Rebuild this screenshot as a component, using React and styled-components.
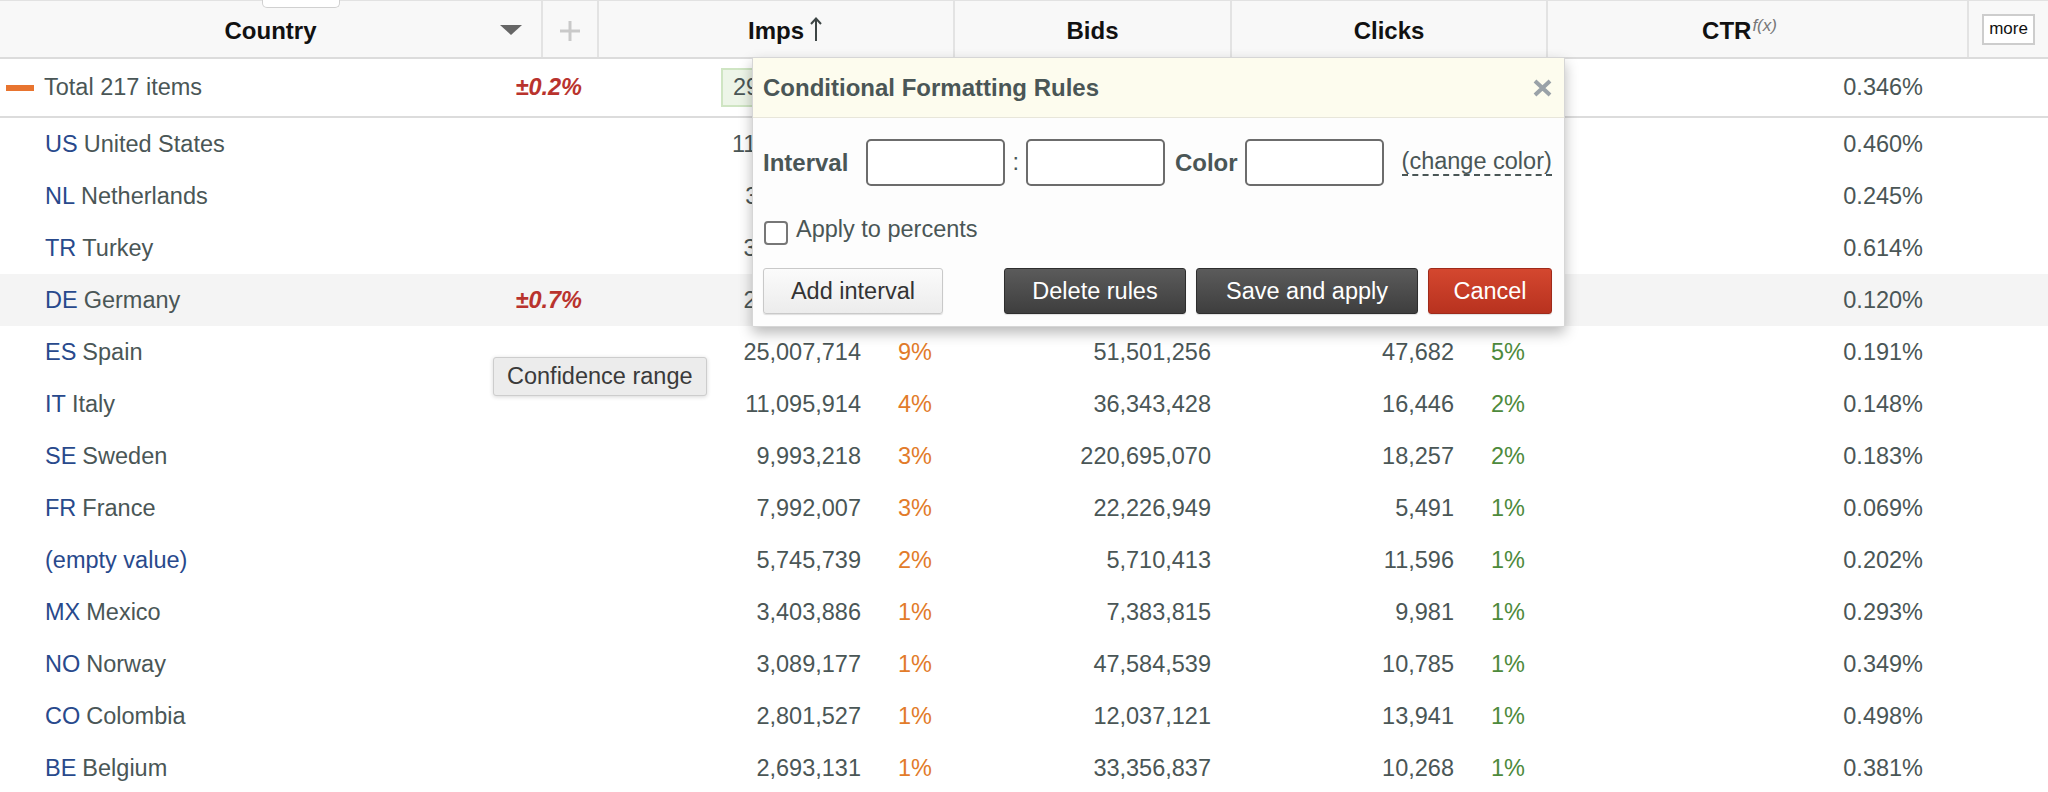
import React from 'react'
import styled, { createGlobalStyle } from 'styled-components'

const COLS = '543px 56px 356px 277px 316px 421px 79px'

const GlobalStyle = createGlobalStyle`
  body {
    margin: 0;
    background: #fff;
    font-family: "Liberation Sans", Arial, Helvetica, sans-serif;
  }
`

const rows = [
  { code: 'US', name: 'United States', imps: '116,285,450', ip: '40%', bids: '182,734,112', clicks: '534,913', cp: '40%', ctr: '0.460%' },
  { code: 'NL', name: 'Netherlands', imps: '38,420,115', ip: '13%', bids: '94,126,803', clicks: '94,129', cp: '7%', ctr: '0.245%' },
  { code: 'TR', name: 'Turkey', imps: '31,778,402', ip: '11%', bids: '61,904,377', clicks: '195,118', cp: '15%', ctr: '0.614%' },
  { code: 'DE', name: 'Germany', conf: '±0.7%', imps: '27,306,958', ip: '9%', bids: '48,220,510', clicks: '32,768', cp: '2%', ctr: '0.120%', hl: true },
  { code: 'ES', name: 'Spain', imps: '25,007,714', ip: '9%', bids: '51,501,256', clicks: '47,682', cp: '5%', ctr: '0.191%' },
  { code: 'IT', name: 'Italy', imps: '11,095,914', ip: '4%', bids: '36,343,428', clicks: '16,446', cp: '2%', ctr: '0.148%' },
  { code: 'SE', name: 'Sweden', imps: '9,993,218', ip: '3%', bids: '220,695,070', clicks: '18,257', cp: '2%', ctr: '0.183%' },
  { code: 'FR', name: 'France', imps: '7,992,007', ip: '3%', bids: '22,226,949', clicks: '5,491', cp: '1%', ctr: '0.069%' },
  { code: '', name: '(empty value)', imps: '5,745,739', ip: '2%', bids: '5,710,413', clicks: '11,596', cp: '1%', ctr: '0.202%' },
  { code: 'MX', name: 'Mexico', imps: '3,403,886', ip: '1%', bids: '7,383,815', clicks: '9,981', cp: '1%', ctr: '0.293%' },
  { code: 'NO', name: 'Norway', imps: '3,089,177', ip: '1%', bids: '47,584,539', clicks: '10,785', cp: '1%', ctr: '0.349%' },
  { code: 'CO', name: 'Colombia', imps: '2,801,527', ip: '1%', bids: '12,037,121', clicks: '13,941', cp: '1%', ctr: '0.498%' },
  { code: 'BE', name: 'Belgium', imps: '2,693,131', ip: '1%', bids: '33,356,837', clicks: '10,268', cp: '1%', ctr: '0.381%' },
]

const App = () => {
  return (
    <>
      <GlobalStyle />
      <Page>
        <HeaderRow>
          <HeadCell $split>
            <Tab />
            <span />
            <span>Country</span>
            <SortToggle>
              <svg width="22" height="10" viewBox="0 0 22 10"><polygon points="0,0 22,0 11,10" fill="#666" /></svg>
            </SortToggle>
          </HeadCell>
          <HeadCell>
            <svg width="20" height="20" viewBox="0 0 20 20">
              <path d="M10 0V20M0 10H20" stroke="#c9c9c9" strokeWidth="3" />
            </svg>
          </HeadCell>
          <HeadCell>
            Imps
            <SortArrow width="12" height="25" viewBox="0 0 12 25">
              <path d="M6 24V2M1 7L6 1.5L11 7" stroke="#3d4545" strokeWidth="2" fill="none" />
            </SortArrow>
          </HeadCell>
          <HeadCell>Bids</HeadCell>
          <HeadCell>Clicks</HeadCell>
          <HeadCell $shift={36}>
            CTR<Formula>f(x)</Formula>
          </HeadCell>
          <HeadCell $last>
            <MoreButton>more</MoreButton>
          </HeadCell>
        </HeaderRow>

        <TotalRow>
          <NameCell $pad={6}>
            <Label>
              <Dash />
              Total 217 items
            </Label>
            <Conf>±0.2%</Conf>
          </NameCell>
          <TotalImps>
            <TotalBox>293,544,015</TotalBox>
          </TotalImps>
          <NumCell $pr={21}>773,014,560</NumCell>
          <SplitCell>
            <Num>1,015,648</Num>
            <Pct />
          </SplitCell>
          <NumCell $pr={46}>0.346%</NumCell>
          <div />
        </TotalRow>

        {rows.map((r) => (
          <Row key={r.name} $hl={r.hl}>
            <NameCell $pad={45}>
              <Label>
                {r.code ? (
                  <>
                    <Code $gap>{r.code}</Code>
                    {r.name}
                  </>
                ) : (
                  <Code>{r.name}</Code>
                )}
              </Label>
              {r.conf && <Conf>{r.conf}</Conf>}
            </NameCell>
            <SplitCell>
              <Num>{r.imps}</Num>
              <Pct $tone="#e27b2a">{r.ip}</Pct>
            </SplitCell>
            <NumCell $pr={21}>{r.bids}</NumCell>
            <SplitCell>
              <Num>{r.clicks}</Num>
              <Pct $tone="#4d8a3c">{r.cp}</Pct>
            </SplitCell>
            <NumCell $pr={46}>{r.ctr}</NumCell>
            <div />
          </Row>
        ))}

        <Tooltip>Confidence range</Tooltip>

        <Popup>
          <PopHead>
            <PopTitle>Conditional Formatting Rules</PopTitle>
            <svg width="19" height="18" viewBox="0 0 19 18">
              <path d="M2 2L17 16M17 2L2 16" stroke="#9aa2a8" strokeWidth="4" />
            </svg>
          </PopHead>
          <PopBody>
            <FieldRow>
              <FieldLabel $mr={18}>Interval</FieldLabel>
              <Field />
              <Colon>:</Colon>
              <Field />
              <FieldLabel $ml={10} $mr={7}>Color</FieldLabel>
              <Field />
              <ChangeLink>(change color)</ChangeLink>
            </FieldRow>
            <CheckRow>
              <CheckBox />
              <CheckText>Apply to percents</CheckText>
            </CheckRow>
            <ButtonRow>
              <Button $kind="light" $w={180}>Add interval</Button>
              <Button $kind="dark" $w={182} $push>Delete rules</Button>
              <Button $kind="dark" $w={222}>Save and apply</Button>
              <Button $kind="red" $w={124}>Cancel</Button>
            </ButtonRow>
          </PopBody>
        </Popup>
      </Page>
    </>
  )
}

const Page = styled.div`
  position: relative;
  width: 2048px;
  height: 792px;
  overflow: hidden;
  color: #4a5656;
  font-size: 23.5px;
`

const HeaderRow = styled.div`
  display: grid;
  grid-template-columns: ${COLS};
  height: 59px;
  box-sizing: border-box;
  background: #f8f8f8;
  border-top: 1px solid #e2e2e2;
  border-bottom: 2px solid #dcdcdc;
`

const HeadCell = styled.div`
  position: relative;
  display: ${(p) => (p.$split ? 'grid' : 'flex')};
  grid-template-columns: 60px 1fr 60px;
  align-items: center;
  justify-content: center;
  padding-right: ${(p) => p.$shift || 0}px;
  padding-top: 3px;
  border-right: ${(p) => (p.$last ? 'none' : '2px solid #e3e3e3')};
  color: #111;
  font-size: 24px;
  font-weight: bold;
  text-align: center;
`

const Tab = styled.div`
  position: absolute;
  left: 262px;
  top: -2px;
  width: 76px;
  height: 8px;
  background: #fff;
  border: 1px solid #d0d0d0;
  border-top: none;
  border-radius: 0 0 5px 5px;
`

const SortToggle = styled.span`
  display: flex;
  justify-content: center;
  padding-bottom: 2px;
`

const SortArrow = styled.svg`
  margin-left: 6px;
  margin-right: -18px;
  margin-top: -2px;
`

const Formula = styled.sup`
  font-size: 17px;
  font-weight: normal;
  font-style: italic;
  color: #777;
  margin-left: 1px;
  position: relative;
  top: -5px;
`

const MoreButton = styled.span`
  display: flex;
  align-items: center;
  justify-content: center;
  width: 53px;
  height: 31px;
  box-sizing: border-box;
  margin-top: -3px;
  background: #fff;
  border: 2px solid #cdcdcd;
  color: #111;
  font-size: 17px;
  font-weight: normal;
`

const Row = styled.div`
  display: grid;
  grid-template-columns: ${COLS};
  height: 52px;
  align-items: center;
  background: ${(p) => (p.$hl ? '#f4f4f4' : '#fff')};
`

const TotalRow = styled(Row)`
  height: 59px;
  box-sizing: border-box;
  border-bottom: 2px solid #dcdcdc;
`

const NameCell = styled.div`
  grid-column: span 2;
  display: flex;
  align-items: center;
  justify-content: space-between;
  padding: 0 17px 0 ${(p) => p.$pad}px;
`

const Label = styled.span`
  display: flex;
  align-items: center;
  white-space: nowrap;
`

const Dash = styled.span`
  width: 28px;
  height: 6px;
  margin-right: 10px;
  background: #e8742f;
`

const Code = styled.span`
  color: #28498c;
  margin-right: ${(p) => (p.$gap ? '6px' : '0')};
`

const Conf = styled.span`
  color: #b9332d;
  font-weight: bold;
  font-style: italic;
`

const SplitCell = styled.div`
  display: grid;
  grid-template-columns: 1fr 94px;
  align-items: center;
`

const Num = styled.span`
  text-align: right;
`

const Pct = styled.span`
  padding-left: 37px;
  color: ${(p) => p.$tone || 'inherit'};
`

const NumCell = styled.div`
  text-align: right;
  padding-right: ${(p) => p.$pr}px;
`

const TotalImps = styled.div`
  display: flex;
  padding-left: 122px;
`

const TotalBox = styled.span`
  display: flex;
  align-items: center;
  height: 39px;
  padding: 0 10px;
  box-sizing: border-box;
  background: #edf5e8;
  border: 2px solid #cfe5c3;
`

const Tooltip = styled.div`
  position: absolute;
  left: 493px;
  top: 357px;
  height: 39px;
  box-sizing: border-box;
  display: flex;
  align-items: center;
  padding: 0 13px;
  background: #ececec;
  border: 1px solid #cdcdcd;
  border-radius: 3px;
  box-shadow: 0 1px 4px rgba(0, 0, 0, 0.16);
  color: #3a3a3a;
`

const Popup = styled.div`
  position: absolute;
  left: 752px;
  top: 57px;
  width: 813px;
  height: 270px;
  box-sizing: border-box;
  display: flex;
  flex-direction: column;
  border: 1px solid #d6d6d6;
  border-radius: 2px;
  box-shadow: 0 6px 14px rgba(0, 0, 0, 0.28);
  overflow: hidden;
  background: #fff;
`

const PopHead = styled.div`
  display: flex;
  align-items: center;
  justify-content: space-between;
  height: 61px;
  box-sizing: border-box;
  padding: 0 12px 0 10px;
  background: #fdfcee;
  border-bottom: 1px solid #e8e6da;
`

const PopTitle = styled.span`
  font-size: 24px;
  font-weight: bold;
  color: #4a5656;
`

const PopBody = styled.div`
  flex: 1;
  padding: 21px 12px 12px 10px;
  background: #fdfdfd;
`

const FieldRow = styled.div`
  display: flex;
  align-items: center;
  height: 47px;
  white-space: nowrap;
`

const FieldLabel = styled.span`
  font-size: 24px;
  font-weight: bold;
  margin-left: ${(p) => p.$ml || 0}px;
  margin-right: ${(p) => p.$mr || 0}px;
`

const Field = styled.span`
  flex-shrink: 0;
  width: 139px;
  height: 47px;
  box-sizing: border-box;
  background: #fff;
  border: 2px solid #6c6c6c;
  border-radius: 5px;
`

const Colon = styled.span`
  margin: 0 7px;
`

const ChangeLink = styled.span`
  flex-shrink: 0;
  margin-left: 18px;
  line-height: 1.1;
  border-bottom: 2px dashed #4a5656;
`

const CheckRow = styled.div`
  display: flex;
  align-items: flex-start;
  margin-top: 35px;
  height: 24px;
`

const CheckBox = styled.span`
  width: 24px;
  height: 24px;
  box-sizing: border-box;
  background: #fff;
  border: 2px solid #777;
  border-radius: 4px;
  margin-left: 1px;
`

const CheckText = styled.span`
  margin-left: 8px;
  margin-top: -5px;
`

const ButtonRow = styled.div`
  display: flex;
  gap: 10px;
  margin-top: 23px;
  height: 46px;
`

const buttonTones = {
  light: 'background: linear-gradient(#fbfbfb, #ececec); border-color: #c9c9c9; color: #333;',
  dark: 'background: linear-gradient(#5b5b5b, #3e3e3e); border-color: #2e2e2e; color: #fff;',
  red: 'background: linear-gradient(#d4472f, #b8321f); border-color: #9f2a1a; color: #fff;',
}

const Button = styled.span`
  display: flex;
  align-items: center;
  justify-content: center;
  width: ${(p) => p.$w}px;
  box-sizing: border-box;
  margin-left: ${(p) => (p.$push ? 'auto' : '0')};
  border: 1px solid;
  border-radius: 3px;
  box-shadow: 0 1px 1px rgba(0, 0, 0, 0.12);
  ${(p) => buttonTones[p.$kind]}
`

export default App
